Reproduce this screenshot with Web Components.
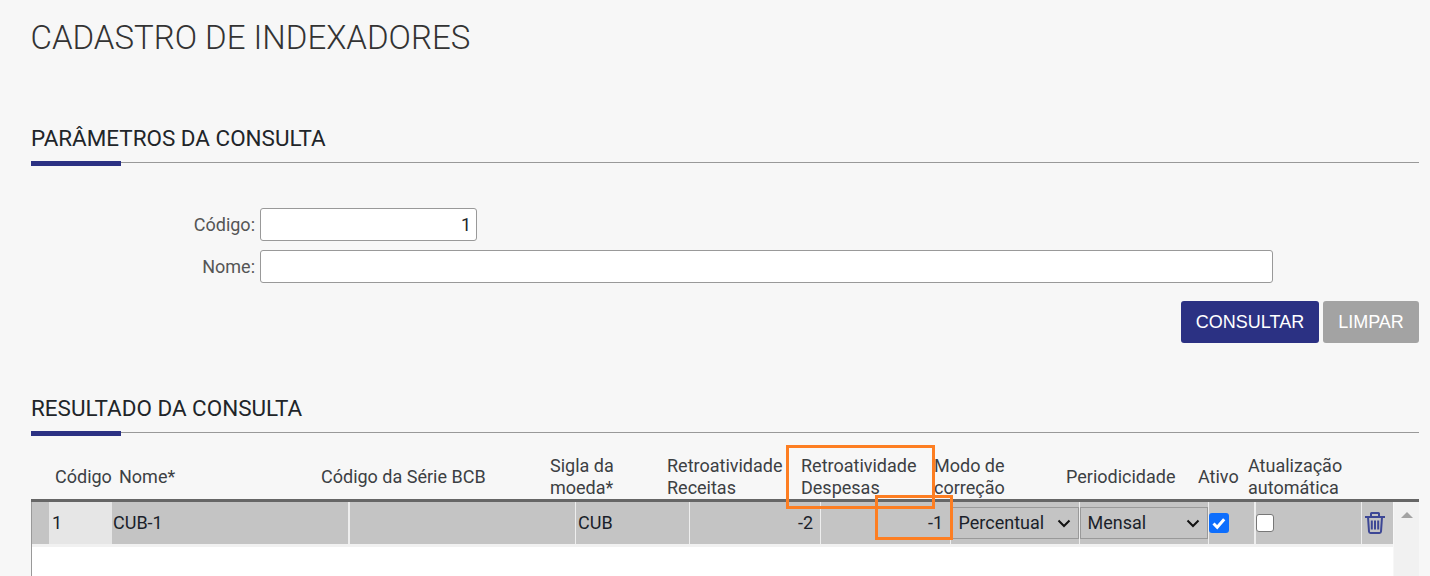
<!DOCTYPE html>
<html lang="pt-BR"><head><meta charset="utf-8"><title>Cadastro de Indexadores</title>
<style>
html,body{margin:0;height:576px;overflow:hidden;background:#f7f7f7}
body{font-family:Roboto,"Liberation Sans",sans-serif;color:#212529;padding:0 11px 0 31px;box-sizing:border-box}
</style></head><body>
<app-page>
  <page-title>CADASTRO DE INDEXADORES</page-title>
  <section-head style="margin-top:65px">PARÂMETROS DA CONSULTA</section-head>
  <query-form></query-form>
  <section-head style="margin-top:51px">RESULTADO DA CONSULTA</section-head>
  <result-table></result-table>
</app-page>
<script>
function def(name, html){
  customElements.define(name, class extends HTMLElement{
    constructor(){super();this.attachShadow({mode:'open'}).innerHTML=html;}
  });
}
def('app-page','<style>:host{display:block;position:relative}</style><slot></slot>');
def('page-title',`<style>:host{display:block;padding-top:17px;font:300 33px/42px Roboto,sans-serif;color:#333;text-indent:-.5px}</style><slot></slot>`);
def('section-head',`<style>:host{display:block;position:relative;font:400 22.45px/28px Roboto,sans-serif;color:#212529;height:38px;border-bottom:1px solid #999}
 .bar{position:absolute;left:0;bottom:-4px;width:90px;height:5px;background:#2b3183}</style><slot></slot><div class="bar"></div>`);
def('query-form',`<style>
:host{display:block;padding-top:45px}
.row{display:flex;align-items:center;margin-bottom:9px}
label{width:229px;text-align:right;padding-right:5px;box-sizing:border-box;font:400 18px/33px Roboto,sans-serif;color:#555}
.in{height:33px;box-sizing:border-box;border:1px solid #999;border-radius:3px;background:#fff;font:400 18px/31px Roboto,sans-serif;color:#212529;padding:0 5px;text-align:right}
.actions{display:flex;justify-content:flex-end;gap:4px;margin-top:18px}
button{height:42px;border:0;border-radius:3px;color:#fff;font:400 18px "Liberation Sans",Arial,sans-serif;padding:0;cursor:pointer}
.p{width:138px;background:#2b3183}.s{width:96px;background:#a3a3a3}
</style>
<div class="row"><label>Código:</label><div class="in" style="width:217px">1</div></div>
<div class="row"><label>Nome:</label><div class="in" style="width:1013px"></div></div>
<div class="actions"><button class="p">CONSULTAR</button><button class="s">LIMPAR</button></div>`);
def('result-table',`<style>
:host{display:block;position:relative;width:1388px;font:400 18px/22px Roboto,sans-serif}
.head{display:grid;grid-template-columns:24px 64px 202px 229px 117px 134px 133px 132px 132px 50px 1fr;align-items:center;border-bottom:3px solid #666;width:1388px;box-sizing:border-box;height:69px;padding-top:22px;color:#3c4043;white-space:nowrap}
.head div{line-height:22px}
.body{display:flex;height:74px}
.main{width:1362px;background:#fff;border-left:1px solid #999;box-sizing:border-box;height:100%}
.row{display:grid;grid-template-columns:17px 63px 236px 2px 225px 1px 113px 1px 130px 1px 129px 1px 128px 1px 128px 1px 45px 2px 105px 1px 31px;height:42px;background:#c4c4c4;color:#1b1f2a;width:1361px}
.gap{height:3px;background:#f1f1f1}
.sep{background:#eee}
.c{padding:0 4px;line-height:42px;overflow:hidden;white-space:nowrap}
.code{background:#e6e6e6;padding:0 3px}
.r{text-align:right;padding:0 7px}
.sel{margin:5px 0;height:32px;box-sizing:border-box;border:1px solid #999;display:flex;align-items:center;justify-content:space-between;padding:0 7px 0 6.5px;color:#1b1f2a;overflow:hidden;white-space:nowrap}
.sel svg{flex:none}
.ck{display:flex;align-items:center}
.cb{display:block;box-sizing:border-box;border-radius:3px}
.cb.on{width:20px;height:20px;background:#0d6efd}
.cb.off{width:18px;height:18px;background:#fff;border:1px solid #777}
.trash{display:flex;align-items:center;padding-left:3px}
.scroll{width:25px;margin-left:1px;background:#f1f1f1;height:100%;position:relative}
.scroll i{position:absolute;left:7px;top:10px;width:0;height:0;border:6px solid transparent;border-top:0;border-bottom:6px solid #a3a3a3}
.mark{position:absolute;border:3px solid #fd7e22;box-sizing:border-box;pointer-events:none}
</style>
<div class="head">
 <div></div><div>Código</div><div>Nome*</div><div>Código da Série BCB</div>
 <div>Sigla da<br>moeda*</div><div>Retroatividade<br>Receitas</div><div>Retroatividade<br>Despesas</div>
 <div>Modo de<br>correção</div><div>Periodicidade</div><div>Ativo</div><div>Atualização<br>automática</div>
</div>
<div class="body">
 <div class="main">
  <div class="row">
   <div></div><div class="c code">1</div><div class="c" style="padding:0 1px">CUB-1</div><div class="sep"></div>
   <div></div><div class="sep"></div><div class="c" style="padding:0 2px">CUB</div><div class="sep"></div>
   <div class="c r">-2</div><div class="sep"></div><div class="c r">-1</div><div class="sep"></div>
   <div class="sel">Percentual<svg width="14" height="9" viewBox="0 0 14 9"><path d="M1.500 1.500l5.500 5.500 5.500-5.500" fill="none" stroke="#111" stroke-width="2"/></svg></div><div class="sep"></div>
   <div class="sel">Mensal<svg width="14" height="9" viewBox="0 0 14 9"><path d="M1.500 1.500l5.500 5.500 5.500-5.500" fill="none" stroke="#111" stroke-width="2"/></svg></div><div class="sep"></div>
   <div class="ck"><svg class="cb on" viewBox="0 0 20 20"><path d="M4.500 10.500l3.700 3.700 7-8" fill="none" stroke="#fff" stroke-width="3"/></svg></div><div class="sep"></div>
   <div class="ck"><span class="cb off"></span></div><div class="sep"></div>
   <div class="trash"><svg width="20" height="22" viewBox="0 0 20 22" fill="none" stroke="#2f3a91" stroke-width="2" opacity=".9"><path d="M0 5h20M6 4.500V1.500q0-.5.500-.5h7q.5 0 .5.500v3"/><path d="M3 5l1 14.500q.1 1.500 1.500 1.500h9q1.400 0 1.500-1.500L17 5"/><path d="M6.800 8.500v9M10 8.500v9M13.200 8.500v9"/></svg></div>
  </div>
  <div class="gap"></div>
 </div>
 <div class="scroll"><i></i></div>
</div>
<div class="mark" style="left:755px;top:12px;width:149px;height:64px"></div>
<div class="mark" style="left:844px;top:62px;width:78px;height:45px"></div>`);
</script>
</body></html>
